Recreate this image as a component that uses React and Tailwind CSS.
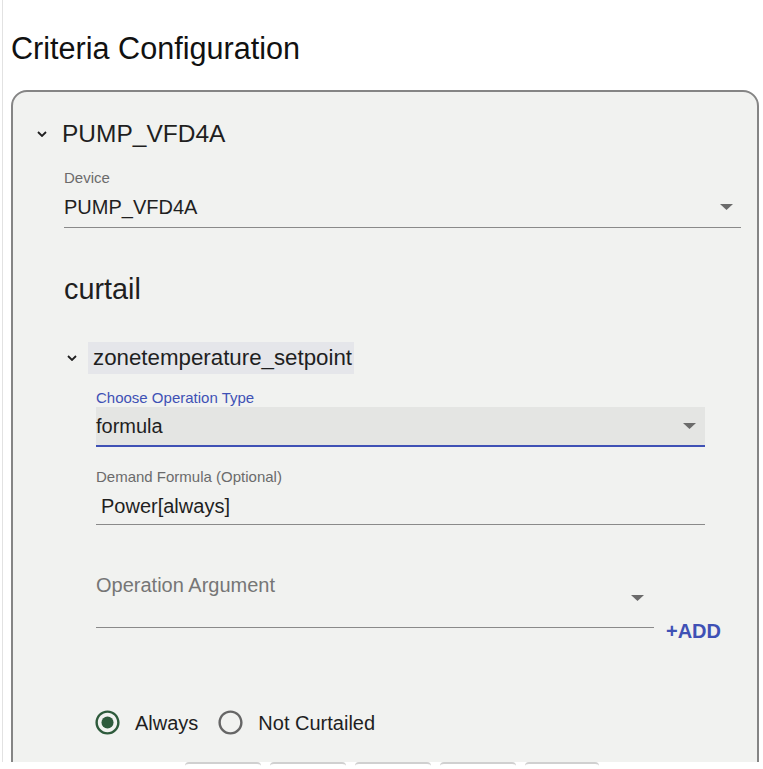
const font = { fontFamily: '"Liberation Sans", Arial, sans-serif' }

function Chevron({ className }) {
  return (
    <svg className={className} width="10" height="6" viewBox="0 0 10 6" fill="none">
      <polyline points="1,1 5,5 9,1" stroke="#1f1f1f" strokeWidth="1.8" />
    </svg>
  )
}

function Caret({ className }) {
  return (
    <svg className={className} width="13" height="6" viewBox="0 0 13 6">
      <polygon points="0,0 13,0 6.5,6" fill="#6b6b6b" />
    </svg>
  )
}

function Radio({ checked }) {
  return (
    <svg width="29" height="29" viewBox="0 0 24 24">
      {checked ? (
        <>
          <path
            fill="#2e5b3c"
            d="M12 2C6.48 2 2 6.48 2 12s4.48 10 10 10 10-4.48 10-10S17.52 2 12 2zm0 18c-4.42 0-8-3.58-8-8s3.58-8 8-8 8 3.58 8 8-3.58 8-8 8z"
          />
          <circle cx="12" cy="12" r="5" fill="#2e5b3c" />
        </>
      ) : (
        <path
          fill="#666666"
          d="M12 2C6.48 2 2 6.48 2 12s4.48 10 10 10 10-4.48 10-10S17.52 2 12 2zm0 18c-4.42 0-8-3.58-8-8s3.58-8 8-8 8 3.58 8 8-3.58 8-8 8z"
        />
      )}
    </svg>
  )
}

export default function App() {
  return (
    <div style={font} className="min-h-screen ml-[2px] border-l border-[#e2e2e2] bg-white pl-[8px] pt-[30px] text-[#1f1f1f]">
      <h1 className="text-[30.6px] leading-[36px] text-[#111]">Criteria Configuration</h1>

      <div className="mt-[24px] mr-[4px] rounded-[16px] border-2 border-[#858585] bg-[#f1f2f0] pt-[26px] pl-[24px] pr-[16px] pb-[40px]">
        <div className="flex items-center">
          <Chevron />
          <div className="ml-[15px] text-[24.5px] leading-[32px]">PUMP_VFD4A</div>
        </div>

        <div className="pl-[27px]">
          <div className="mt-[19px] text-[15px] leading-[18px] text-[#6b6b6b]">Device</div>
          <div className="flex items-center justify-between border-b border-[#8a8a8a] pt-[8px] pb-[8px]">
            <span className="text-[20px] leading-[24px]">PUMP_VFD4A</span>
            <Caret className="mr-[8px]" />
          </div>

          <div className="mt-[45px] text-[28.8px] leading-[32px]">curtail</div>

          <div className="mt-[37px] flex items-center">
            <Chevron className="ml-[3px]" />
            <div className="ml-[11px] bg-[#e5e6ea] pl-[5px] pr-[2px] text-[22.3px] leading-[32px]">
              zonetemperature_setpoint
            </div>
          </div>

          <div className="pl-[32px] pr-[36px]">
            <div className="mt-[15px] text-[15px] leading-[18px] text-[#3f51b5]">Choose Operation Type</div>
            <div className="flex items-center justify-between border-b-2 border-[#3f51b5] bg-[#e4e5e3] pt-[7px] pb-[7px]">
              <span className="text-[20px] leading-[24px]">formula</span>
              <Caret className="mr-[9px]" />
            </div>

            <div className="mt-[21px] text-[15px] leading-[18px] text-[#6b6b6b]">Demand Formula (Optional)</div>
            <div className="border-b border-[#8a8a8a] pt-[8px] pb-[6px] pl-[5px] text-[20px] leading-[24px]">
              Power[always]
            </div>

            <div className="flex items-start">
              <div className="w-[558px] shrink-0 border-b border-[#8a8a8a] pt-[48px] pb-[30px]">
                <div className="flex h-[24px] items-start justify-between">
                  <span className="text-[20px] leading-[24px] text-[#767676]">Operation Argument</span>
                  <Caret className="mt-[22px] mr-[10px]" />
                </div>
              </div>
              <button className="ml-[12px] mt-[94px] shrink-0 text-[20px] font-bold leading-[24px] text-[#3f51b5]">+ADD</button>
            </div>

            <div className="mt-[65px] flex items-center">
              <div className="-ml-[3px]">
                <Radio checked />
              </div>
              <span className="ml-[13px] text-[20px] leading-[24px]">Always</span>
              <div className="ml-[18px]">
                <Radio />
              </div>
              <span className="ml-[13px] text-[20px] leading-[24px]">Not Curtailed</span>
            </div>
          </div>
        </div>
      </div>

      <div className="fixed bottom-0 left-0 right-0 h-[7px] overflow-hidden bg-white">
        <div className="ml-[185px] flex gap-[9px]">
          <div className="h-[30px] w-[76px] rounded-[4px] border-t-2 border-[#d0d0d0] bg-white" />
          <div className="h-[30px] w-[76px] rounded-[4px] border-t-2 border-[#d0d0d0] bg-white" />
          <div className="h-[30px] w-[76px] rounded-[4px] border-t-2 border-[#d0d0d0] bg-white" />
          <div className="h-[30px] w-[76px] rounded-[4px] border-t-2 border-[#d0d0d0] bg-white" />
          <div className="h-[30px] w-[74px] rounded-[4px] border-t-2 border-[#d0d0d0] bg-white" />
        </div>
      </div>
    </div>
  )
}
